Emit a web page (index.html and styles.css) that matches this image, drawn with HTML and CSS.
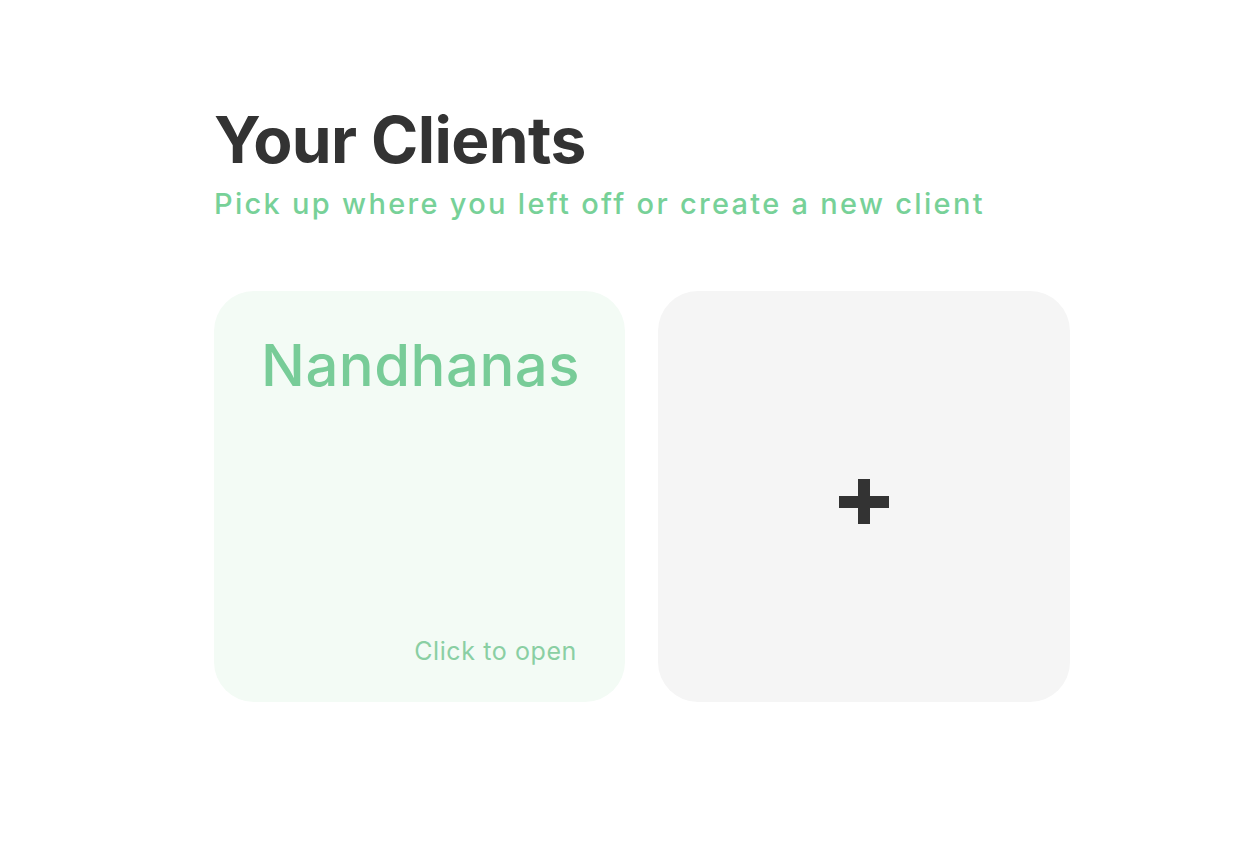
FILE: index.html
```html
<!DOCTYPE html>
<html>
<head>
<meta charset="utf-8">
<link rel="stylesheet" href="styles.css">
</head>
<body>
<main class="page">
  <h1 class="title">Your Clients</h1>
  <p class="subtitle">Pick up where you left off or create a new client</p>
  <div class="cards">
    <div class="card client">
      <div class="client-name">Nandhanas</div>
      <div class="client-hint">Click to open</div>
    </div>
    <div class="card add">
      <svg class="plus" width="50" height="45" viewBox="0 0 50 45">
        <rect x="0" y="17" width="50" height="12" fill="#333"/>
        <rect x="19" y="0" width="12" height="45" fill="#333"/>
      </svg>
    </div>
  </div>
</main>
</body>
</html>
```
FILE: styles.css
```css
html, body {
  margin: 0;
  padding: 0;
  background: #fff;
}
body {
  font-family: Inter, "Open Sans", sans-serif;
}
.page {
  padding: 100px 0 0 214px;
}
.title {
  margin: 0;
  font-size: 64px;
  font-weight: 700;
  color: #333333;
  line-height: 80px;
  letter-spacing: -0.6px;
}
.subtitle {
  margin: 6px 0 0;
  font-size: 29px;
  font-weight: 500;
  color: #77d198;
  line-height: 36px;
  letter-spacing: 2.3px;
}
.cards {
  display: flex;
  gap: 33px;
  margin-top: 69px;
}
.card {
  width: 411px;
  height: 411px;
  border-radius: 40px;
  box-sizing: border-box;
}
.client {
  background: #f3fbf5;
  display: flex;
  flex-direction: column;
  justify-content: space-between;
  align-items: flex-end;
  padding: 38px 45px 36px 49px;
}
.client-name {
  font-size: 58px;
  font-weight: 500;
  color: #78cc98;
  line-height: 72px;
  letter-spacing: 0.5px;
}
.client-hint {
  font-size: 25px;
  color: #8acfa3;
  line-height: 30px;
  letter-spacing: 0.6px;
  margin-right: 3px;
}
.add {
  width: 412px;
  background: #f5f5f5;
  display: flex;
  align-items: center;
  justify-content: center;
  padding-top: 9px;
}
```
